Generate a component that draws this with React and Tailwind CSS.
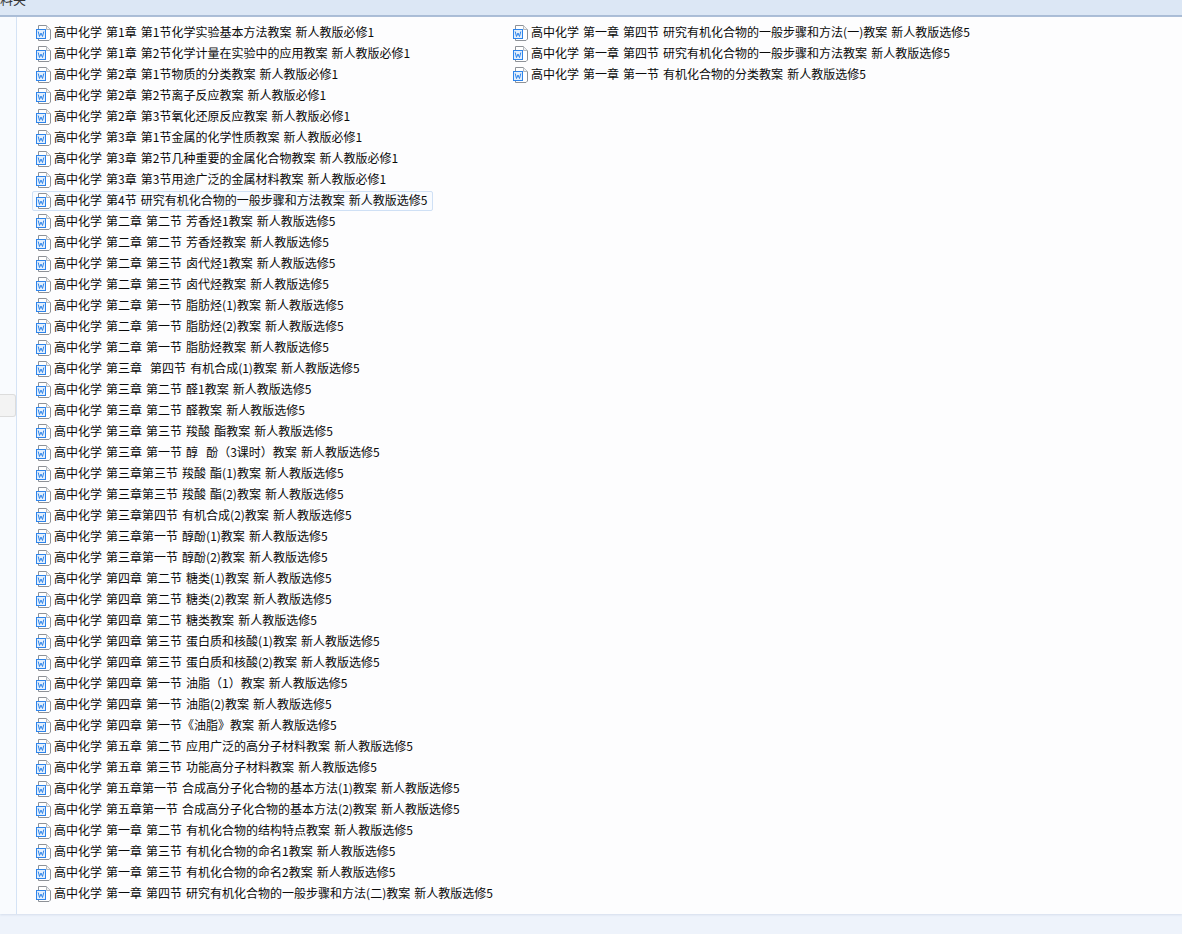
const leftFiles = [
  "高中化学 第1章 第1节化学实验基本方法教案 新人教版必修1",
  "高中化学 第1章 第2节化学计量在实验中的应用教案 新人教版必修1",
  "高中化学 第2章 第1节物质的分类教案 新人教版必修1",
  "高中化学 第2章 第2节离子反应教案 新人教版必修1",
  "高中化学 第2章 第3节氧化还原反应教案 新人教版必修1",
  "高中化学 第3章 第1节金属的化学性质教案 新人教版必修1",
  "高中化学 第3章 第2节几种重要的金属化合物教案 新人教版必修1",
  "高中化学 第3章 第3节用途广泛的金属材料教案 新人教版必修1",
  "高中化学 第4节 研究有机化合物的一般步骤和方法教案 新人教版选修5",
  "高中化学 第二章 第二节 芳香烃1教案 新人教版选修5",
  "高中化学 第二章 第二节 芳香烃教案 新人教版选修5",
  "高中化学 第二章 第三节 卤代烃1教案 新人教版选修5",
  "高中化学 第二章 第三节 卤代烃教案 新人教版选修5",
  "高中化学 第二章 第一节 脂肪烃(1)教案 新人教版选修5",
  "高中化学 第二章 第一节 脂肪烃(2)教案 新人教版选修5",
  "高中化学 第二章 第一节 脂肪烃教案 新人教版选修5",
  "高中化学 第三章  第四节 有机合成(1)教案 新人教版选修5",
  "高中化学 第三章 第二节 醛1教案 新人教版选修5",
  "高中化学 第三章 第二节 醛教案 新人教版选修5",
  "高中化学 第三章 第三节 羧酸 酯教案 新人教版选修5",
  "高中化学 第三章 第一节 醇  酚（3课时）教案 新人教版选修5",
  "高中化学 第三章第三节 羧酸 酯(1)教案 新人教版选修5",
  "高中化学 第三章第三节 羧酸 酯(2)教案 新人教版选修5",
  "高中化学 第三章第四节 有机合成(2)教案 新人教版选修5",
  "高中化学 第三章第一节 醇酚(1)教案 新人教版选修5",
  "高中化学 第三章第一节 醇酚(2)教案 新人教版选修5",
  "高中化学 第四章 第二节 糖类(1)教案 新人教版选修5",
  "高中化学 第四章 第二节 糖类(2)教案 新人教版选修5",
  "高中化学 第四章 第二节 糖类教案 新人教版选修5",
  "高中化学 第四章 第三节 蛋白质和核酸(1)教案 新人教版选修5",
  "高中化学 第四章 第三节 蛋白质和核酸(2)教案 新人教版选修5",
  "高中化学 第四章 第一节 油脂（1）教案 新人教版选修5",
  "高中化学 第四章 第一节 油脂(2)教案 新人教版选修5",
  "高中化学 第四章 第一节《油脂》教案 新人教版选修5",
  "高中化学 第五章 第二节 应用广泛的高分子材料教案 新人教版选修5",
  "高中化学 第五章 第三节 功能高分子材料教案 新人教版选修5",
  "高中化学 第五章第一节 合成高分子化合物的基本方法(1)教案 新人教版选修5",
  "高中化学 第五章第一节 合成高分子化合物的基本方法(2)教案 新人教版选修5",
  "高中化学 第一章 第二节 有机化合物的结构特点教案 新人教版选修5",
  "高中化学 第一章 第三节 有机化合物的命名1教案 新人教版选修5",
  "高中化学 第一章 第三节 有机化合物的命名2教案 新人教版选修5",
  "高中化学 第一章 第四节 研究有机化合物的一般步骤和方法(二)教案 新人教版选修5",
];

const rightFiles = [
  "高中化学 第一章 第四节 研究有机化合物的一般步骤和方法(一)教案 新人教版选修5",
  "高中化学 第一章 第四节 研究有机化合物的一般步骤和方法教案 新人教版选修5",
  "高中化学 第一章 第一节 有机化合物的分类教案 新人教版选修5",
];

const WordIcon = () => (
  <svg width="15" height="16" viewBox="0 0 15 16" className="shrink-0">
    <path d="M2.5 0.5H10.5L14.5 4.5V14L13 15.5H2.5Z" fill="#fff" stroke="#8d9197" />
    <path d="M10.5 0.5V4.5H14.5" fill="#f0f1f3" stroke="#b4b8bd" />
    <rect x="0.5" y="4.5" width="9" height="9" fill="#e3effc" stroke="#2e84ea" />
    <path d="M2.2 6.5L3.5 11.5L5 8L6.5 11.5L7.8 6.5" fill="none" stroke="#2e84ea" strokeWidth="1" />
  </svg>
);

const FileRow = ({ name, selected }) => (
  <div
    className={`flex items-center h-[20px] mt-px w-fit pl-[3px] pr-[5px] rounded-[2px] border whitespace-pre ${
      selected ? "border-[#cfe0f5] bg-[#f8fbff]" : "border-transparent"
    }`}
  >
    <WordIcon />
    <span className="ml-[3px] pb-[2px]">{name}</span>
  </div>
);

export default function App() {
  return (
    <div className="h-[934px] flex flex-col bg-[#eef3fb] overflow-hidden text-[12px] leading-[16px] text-[#0a0a0a] [word-spacing:1.35px] font-['Noto_Sans_CJK_SC','Liberation_Sans',sans-serif]">
      <div className="h-[17px] shrink-0 overflow-hidden bg-[#dce7f5] border-b-2 border-[#a9bcd6]">
        <div className="-mt-[9px] text-[13px] text-[#333]">料夹</div>
      </div>
      <div className="h-[897px] shrink-0 flex bg-[#fdfdfe] shadow-[0_1px_2px_#d5deec]">
        <div className="w-[17px] shrink-0 border-r border-[#d5e3f5] bg-[#f9fbfe] pt-[377px]">
          <div className="h-[23px] w-[16px] rounded-r-[3px] border border-l-0 border-[#dcdcdc] bg-[#f3f3f3]" />
        </div>
        <div className="pl-[15px] pt-[5px] w-[492px] shrink-0">
          {leftFiles.map((name, i) => (
            <FileRow key={name} name={name} selected={i === 8} />
          ))}
        </div>
        <div className="pt-[5px]">
          {rightFiles.map((name) => (
            <FileRow key={name} name={name} />
          ))}
        </div>
      </div>
    </div>
  );
}
